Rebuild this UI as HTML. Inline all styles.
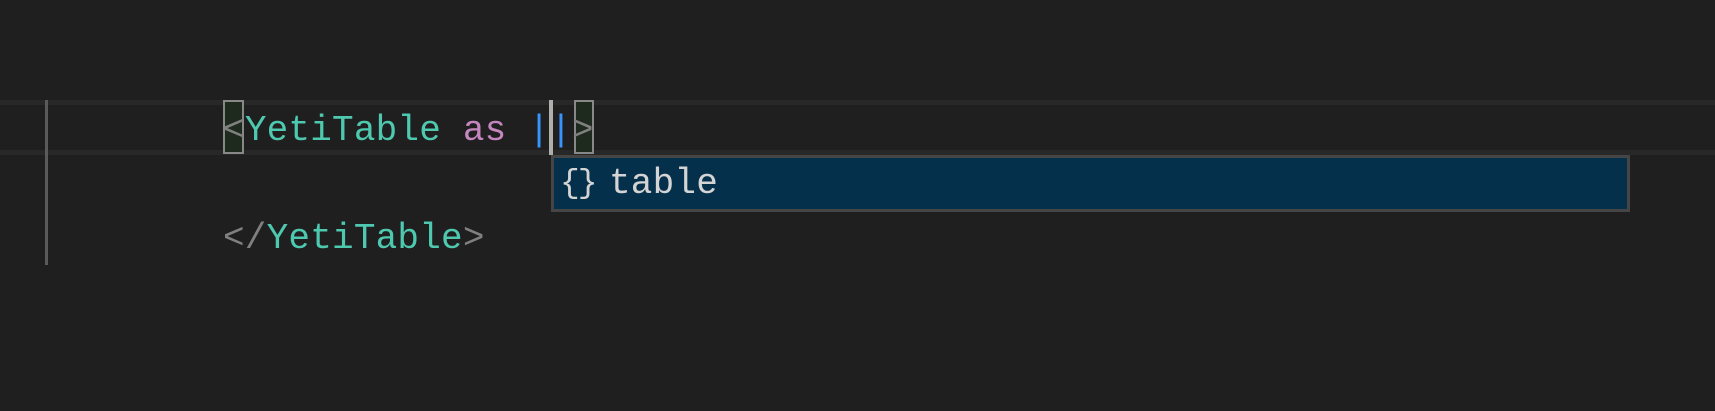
<!DOCTYPE html><html><head><style>
body{margin:0;width:1715px;height:411px;background:#1f1f1f;overflow:hidden;position:relative;font-family:"Liberation Mono",monospace;font-size:36px;letter-spacing:0.2px}
.a{position:absolute}
.t{position:absolute;white-space:pre;line-height:55px;height:55px}
</style></head><body>
<div class="a" style="left:0;top:100px;width:1715px;height:5px;background:#282828"></div>
<div class="a" style="left:0;top:150px;width:1715px;height:5px;background:#282828"></div>
<div class="a" style="left:45px;top:100px;width:3px;height:165px;background:#5a5a5a"></div>
<div class="a" style="left:223px;top:100px;width:17px;height:50px;border:2px solid #888;background:#1e2a1e"></div>
<div class="a" style="left:574px;top:100px;width:16px;height:50px;border:2px solid #888;background:#1e2a1e"></div>
<div class="t" style="left:223px;top:103px"><span style="color:#808080">&lt;</span><span style="color:#4ec9b0">YetiTable</span> <span style="color:#c586c0">as</span> <span style="color:#3794ff">|</span><span style="color:#3794ff">|</span><span style="color:#808080">&gt;</span></div>
<div class="a" style="left:549px;top:100px;width:4px;height:55px;background:#aeafad"></div>
<div class="t" style="left:223px;top:211px"><span style="color:#808080">&lt;/</span><span style="color:#4ec9b0">YetiTable</span><span style="color:#808080">&gt;</span></div>
<div class="a" style="left:551px;top:155px;width:1073px;height:51px;border:3px solid #454545;background:#04304c"></div>
<div class="t" style="left:560px;top:157px;height:54px;line-height:54px;color:#d4d4d4;font-size:33px;letter-spacing:-2px">{}</div>
<div class="t" style="left:609px;top:157px;height:54px;line-height:54px;color:#d4d4d4">table</div>
</body></html>
